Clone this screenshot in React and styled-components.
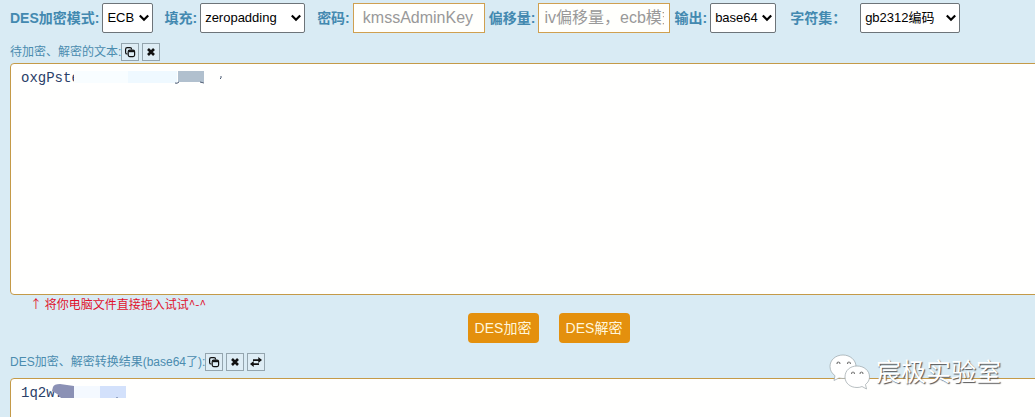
import React from "react";
import styled, { createGlobalStyle } from "styled-components";

const sans = `"Liberation Sans", "Noto Sans CJK SC", sans-serif`;
const mono = `"Liberation Mono", "Noto Sans CJK SC", monospace`;

const GlobalStyle = createGlobalStyle`
  *, *::before, *::after { box-sizing: border-box; }
  body { margin: 0; background: #d9ebf4; font-family: ${sans}; }
`;

const Page = styled.main`
  position: relative;
  height: 100vh;
  overflow: hidden;
  padding: 2px 0 0 10px;
  background: #d9ebf4;
`;

const Toolbar = styled.div`
  display: flex;
  align-items: center;
  height: 32px;
  white-space: nowrap;
`;

const Field = styled.div`
  display: flex;
  align-items: center;
  flex: none;
  gap: ${(p) => p.$gap || 3}px;
  margin-right: ${(p) => p.$after || 0}px;
`;

const Label = styled.label`
  font-size: 14px;
  line-height: 20px;
  font-weight: 700;
  color: #4389b0;
`;

const SelectBox = styled.span`
  position: relative;
  display: flex;
  width: ${(p) => p.$width}px;
`;

const Select = styled.select`
  appearance: none;
  width: 100%;
  height: 30px;
  padding: 0 0 0 4px;
  border: 1px solid #6d7479;
  border-radius: 2px;
  background: #fff;
  color: #000;
  font: 13px/20px ${sans};
`;

const Chevron = styled.svg`
  position: absolute;
  right: 4px;
  top: 11px;
  pointer-events: none;
`;

const TextInput = styled.input`
  width: 132px;
  height: 30px;
  padding: 0 ${(p) => p.$pad}px;
  border: 1px solid #cfa050;
  border-radius: 0;
  background: #fffffc;
  font: 16px/24px ${sans};
  &::placeholder { color: #999; opacity: 1; }
`;

const Caption = styled.div`
  display: flex;
  align-items: center;
  gap: 3px;
  height: 18px;
  margin-top: ${(p) => p.$top}px;
`;

const CaptionLabel = styled.label`
  margin-right: -3px;
  font-size: 12px;
  line-height: 18px;
  color: #4b8caf;
  white-space: nowrap;
`;

const IconButton = styled.button`
  display: flex;
  align-items: center;
  justify-content: center;
  flex: none;
  width: 18px;
  height: 18px;
  padding: 0;
  border: 1px solid #94a5ae;
  background: #deedf5;
  color: #111;
`;

const Editor = styled.div`
  position: relative;
  margin: ${(p) => p.$top}px -10px 0 0;
`;

const TextArea = styled.textarea`
  display: block;
  width: 100%;
  height: 232px;
  padding: 5px 10px;
  border: 1px solid #c49a48;
  border-radius: 4px;
  background: #fffffe;
  color: #2a4068;
  font: 14px/18px ${mono};
  resize: none;
  overflow: hidden;
`;

const Mask = styled.svg`
  position: absolute;
  left: 0;
  top: 0;
  pointer-events: none;
`;

const Hint = styled.p`
  margin: 0 0 0 20px;
  font: 12px/18px "Noto Sans CJK SC", sans-serif;
  color: #e0122c;
`;

const Actions = styled.div`
  display: flex;
  justify-content: center;
  gap: 20px;
  margin-left: 52px;
`;

const ActionButton = styled.button`
  width: 71px;
  height: 30px;
  padding: 0;
  border: 0;
  border-radius: 4px;
  background: #e4900d;
  color: #fff6dc;
  font: 14px/20px ${sans};
  white-space: nowrap;
`;

const Watermark = styled.div`
  position: absolute;
  right: 34px;
  bottom: 26px;
  display: flex;
  align-items: center;
  gap: 6px;
  color: #fff;
  font: 25px/38px ${sans};
  text-shadow: 1px 1px 1px #555;
`;

function Choice({ id, width, value }) {
  return (
    <SelectBox $width={width}>
      <Select id={id} defaultValue={value}>
        <option>{value}</option>
      </Select>
      <Chevron width="10" height="8" viewBox="0 0 10 8" aria-hidden="true">
        <path d="M0.8 1.500 5 5.700 9.200 1.500" fill="none" stroke="#000" strokeWidth="2.200" />
      </Chevron>
    </SelectBox>
  );
}

function CopyButton() {
  return (
    <IconButton type="button" aria-label="复制">
      <svg width="12" height="12" viewBox="0 0 12 12" fill="none" stroke="currentColor" strokeWidth="1.200">
        <path d="M3.500 8H3.200Q1.600 8 1.600 6.400V3.200Q1.600 1.600 3.200 1.600H6Q7.600 1.600 7.600 3.200V3.600" />
        <rect x="4.200" y="4.200" width="6.400" height="6.400" rx="1.500" />
        <path d="M4.600 5.200H10.200" strokeWidth="2" />
      </svg>
    </IconButton>
  );
}

function ClearButton() {
  return (
    <IconButton type="button" aria-label="清空">
      <svg width="10" height="10" viewBox="0 0 10 10" stroke="currentColor" strokeWidth="2.600">
        <path d="M2 2 8 8M8 2 2 8" />
      </svg>
    </IconButton>
  );
}

function SwapButton() {
  return (
    <IconButton type="button" aria-label="互换">
      <svg width="12" height="10" viewBox="0 0 12 10" fill="currentColor">
        <path d="M8.300 0 12 3 8.300 6V4H3V2.200H8.300Z" />
        <path d="M3.700 4 0 7 3.700 10V8H9V6.200H3.700Z" />
      </svg>
    </IconButton>
  );
}

function ChatLogo() {
  return (
    <svg width="41" height="36" viewBox="0 0 41 36" fill="#fff" stroke="#9aa3a8" strokeWidth="0.7" aria-hidden="true">
      <path d="M14 1C6.500 1 1 6 1 12.500C1 16.500 3 19.500 6 21.700L5 26.500 10 24Q14 25 18 24C24 22 27 18 27 12.500C27 6 21 1 14 1Z" />
      <path d="M28 12C21 12 16 16.500 16 23C16 29 21 33.500 28 33.500Q31 33.500 33 32.500L37.500 35 36.500 30.500C39 28.500 40.500 26 40.500 23C40.500 16.500 35 12 28 12Z" />
      <g fill="none" stroke="#777" strokeWidth="1.200">
        <path d="M8 10Q8 8 9.500 8T11 10M18.500 10Q18.500 8 20 8T21.500 10M22.500 20Q22.500 18 24 18T25.500 20M31 20Q31 18 32.500 18T34 20" />
      </g>
    </svg>
  );
}

export default function App() {
  return (
    <>
      <GlobalStyle />
      <Page>
        <Toolbar>
          <Field $after={11}>
            <Label htmlFor="mode">DES加密模式:</Label>
            <Choice id="mode" width={51} value="ECB" />
          </Field>
          <Field $after={12}>
            <Label htmlFor="padding">填充:</Label>
            <Choice id="padding" width={105} value="zeropadding" />
          </Field>
          <Field $after={4}>
            <Label htmlFor="key">密码:</Label>
            <TextInput id="key" $pad={9} placeholder="kmssAdminKey" />
          </Field>
          <Field $after={4}>
            <Label htmlFor="iv">偏移量:</Label>
            <TextInput id="iv" $pad={5} placeholder="iv偏移量，ecb模式不用填写" />
          </Field>
          <Field $after={14}>
            <Label htmlFor="output">输出:</Label>
            <Choice id="output" width={66} value="base64" />
          </Field>
          <Field $gap={14}>
            <Label htmlFor="charset">字符集：</Label>
            <Choice id="charset" width={100} value="gb2312编码" />
          </Field>
        </Toolbar>

        <Caption $top={9}>
          <CaptionLabel htmlFor="source">待加密、解密的文本:</CaptionLabel>
          <CopyButton />
          <ClearButton />
        </Caption>
        <Editor $top={2}>
          <TextArea id="source" defaultValue="oxgPste" spellCheck={false} />
          <Mask width="220" height="30" aria-hidden="true">
            <path d="M64 6H220V22H64Z" fill="#fffffe" />
            <path d="M64 8H118V20H64Z" fill="#f8fdff" />
            <path d="M118 8H167V20H118Z" fill="#eff9ff" />
            <path d="M168 8H194V19H168Z" fill="#b1c0ce" />
            <path d="M165 20Q167 21 169 19M190 19L194 20M211 13V15L210 16" fill="none" stroke="#4b5a72" />
          </Mask>
        </Editor>
        <Hint>↑ 将你电脑文件直接拖入试试^-^</Hint>

        <Actions>
          <ActionButton type="button">DES加密</ActionButton>
          <ActionButton type="button">DES解密</ActionButton>
        </Actions>

        <Caption $top={10}>
          <CaptionLabel htmlFor="result">DES加密、解密转换结果(base64了):</CaptionLabel>
          <CopyButton />
          <ClearButton />
          <SwapButton />
        </Caption>
        <Editor $top={7}>
          <TextArea id="result" defaultValue="1q2w." spellCheck={false} />
          <Mask width="120" height="30" aria-hidden="true">
            <path d="M64 8H90V20H64Z" fill="#f4f9ff" />
            <path d="M90 8H116V20H90Z" fill="#d3e1fb" />
            <path d="M43 9Q44 6 50 6L64 8V20H51Q47 15 42 13Z" fill="#8b91b5" />
            <path d="M107 19V20" stroke="#53658c" />
          </Mask>
        </Editor>

        <Watermark>
          <ChatLogo />
          <span>宸极实验室</span>
        </Watermark>
      </Page>
    </>
  );
}
